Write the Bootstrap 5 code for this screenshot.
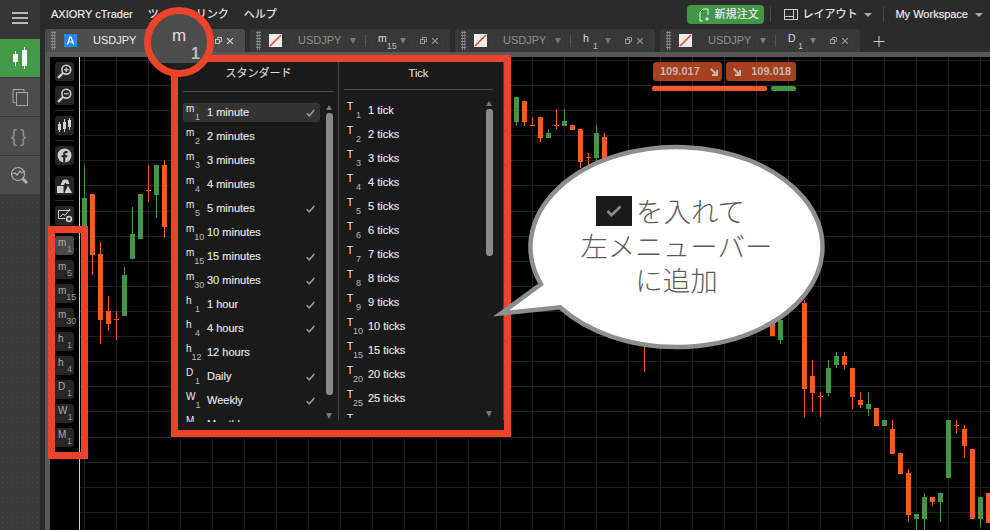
<!DOCTYPE html>
<html lang="ja">
<head>
<meta charset="utf-8">
<title>cTrader</title>
<link href="https://cdn.jsdelivr.net/npm/bootstrap@5.3.0/dist/css/bootstrap.min.css" rel="stylesheet">
<style>
html,body{height:100%;margin:0;overflow:hidden;background:#000}
body{font-family:"Liberation Sans","Noto Sans CJK JP",sans-serif;font-size:11px;line-height:1.2;color:#ddd}
.x-app{width:990px;height:530px}
.x-dots{background-color:#3b3b3b;background-image:radial-gradient(#4a4a4a .6px,transparent .7px);background-size:5px 5px}
.x-side{width:40px;flex:none}
.x-burger{height:39px;background:#363636;padding:12px 12px 0}
.x-burger i{display:block;height:2px;background:#b8b8b8;margin-bottom:3px}
.x-sitem{height:39px;background:#4c4c4c;border-bottom:1px solid #3a3a3a;color:#9b9b9b}
.x-sitem.on{background:#429b47;color:#fff}
.x-brace{font-size:19px;letter-spacing:3px;color:#8f8f8f;font-family:"Liberation Sans",sans-serif}
.x-main{flex:1 1 auto;background:#2b2b2b;min-width:0}
.x-top{height:29px;padding-left:11px;flex:none;color:#f0f0f0;-webkit-text-stroke:.15px #f0f0f0}
.x-mi{margin-left:15px}
.x-green{width:77px;height:19px;background:#429646;border-radius:4px;padding-left:11px;color:#eef}
.x-green span{margin-left:3px;letter-spacing:.1px}
.x-sep{width:1px;height:15px;background:#4b4b4b}
.x-sp1{margin:0 13px 0 6px}
.x-lay{margin-right:4px}
.x-cr{width:0;height:0;border-left:4px solid transparent;border-right:4px solid transparent;border-top:4px solid #aaa;flex:none}
.x-cr1{margin:0 11px 0 7px}
.x-sp2{margin-right:11px}
.x-cr2{margin:0 7px 0 7px}
.x-tabs{height:23px;padding-left:5px;flex:none;gap:5px}
.x-tab{width:200px;height:23px;background-color:#383838;background-image:radial-gradient(#444 .6px,transparent .7px);background-size:5px 5px;border-radius:3px 3px 0 0;padding-left:6px;color:#8f8f8f;font-size:11px}
.x-tab.on{background:#4d4d4d;color:#eee}
.x-grip{width:5px;height:19px;background-image:radial-gradient(#8a8a8a 1px,transparent 1.1px);background-size:2.5px 3px;flex:none}
.x-ico{width:13px;height:13px;margin-left:8px;flex:none;position:relative;display:block}
.x-name{margin-left:16px;width:52px;flex:none}
.x-ar{width:0;height:0;border-left:3.5px solid transparent;border-right:3.5px solid transparent;border-top:6px solid #777;flex:none}
.x-dv{width:1px;height:12px;background:#555;margin-left:9px;flex:none}
.x-tf{width:15px;height:20px;margin-left:12px;flex:none;color:#ddd;font-size:10.5px;line-height:1}
.x-tf b{font-weight:400;align-self:flex-start;padding-top:2px}
.x-tf em{font-style:normal;align-self:flex-end;margin-left:auto;font-size:9px;color:#bbb}
.x-ar2{margin-left:7px}
.x-res{margin-left:14px;flex:none}
.x-cl{margin-left:5px;flex:none}
.x-band{height:5px;background:#585858;flex:none;margin-left:5px}
.x-chartrow{flex:1 1 auto;min-height:0;margin-left:5px;border-left:5px solid #585858}
.x-tools{width:30px;flex:none;background:#000;border-right:1px solid #cfcfcf;padding:5px 0 0 5px}
.x-tb{width:19px;height:19px;background:#262626;border-radius:3px;margin-bottom:5px;flex:none;color:#ccc}
.x-tb.x-g{margin-top:6px}
.x-ts{width:19px;height:1px;background:#2a2a2a;margin-bottom:5px;flex:none}
.x-tk{padding:2px 2px 1px 3px;font-size:10px;line-height:1;color:#aaa}
.x-tk.on{background:#4a4a4a}
.x-tk b{font-weight:400;align-self:flex-start}
.x-tk em{font-style:normal;align-self:flex-end;margin-left:auto;font-size:9px;color:#999}
.x-chart{flex:1 1 auto;display:block;background:#000;min-width:0}
.x-redbox{border:7px solid #ec432a;left:48px;top:226px;width:40px;height:233px}
.x-price{height:19px;top:62px;background:#a6401f;border-radius:3px;color:#c4b8ae;font-weight:700;font-size:11px}
.x-pa{left:653px;width:69px;padding:0 4px 0 7px}
.x-pb{left:726px;width:70px;padding:0 5px 0 7px}
.x-bar{height:5px;top:86px;border-radius:2px}
.x-bs{left:652px;width:115px;background:#f2592b}
.x-bb{left:771px;width:25px;background:#429646}
.x-pop{left:171px;top:55px;width:340px;height:382px;border:7px solid #ec432a;background:#1a1a1a}
.x-c1{width:161px;border-right:1px solid #444;flex:none;height:358px}
.x-c2{flex:1 1 auto;height:358px;border-right:1px solid #444}
.x-ph{height:30px;margin:0 5px;border-bottom:1px solid #4a4a4a;padding-top:5px;color:#ddd;text-align:center;-webkit-text-stroke:.15px #ddd}
.x-c1 .x-ph{margin-right:4px}
.x-c2 .x-ph{height:28px;margin-right:10px;padding-top:5px}
.x-pbody{padding-left:5px;margin-top:11px;height:319px;overflow:hidden}
.x-c2 .x-pbody{margin-top:11px;height:317px}
.x-list{width:137px;flex:none;gap:5px}
.x-c2 .x-list{width:142px}
.x-it{height:19px;flex:none;padding:0 5px 0 3px;border-radius:3px;color:#e6e6e6;-webkit-text-stroke:.15px #e6e6e6}
.x-it.on{background:#333}
.x-pre{width:14px;height:19px;margin-right:7px;flex:none;font-size:10px;line-height:1;color:#eee;-webkit-text-stroke:0}
.x-pre b{font-weight:400;align-self:flex-start;padding-top:1px}
.x-pre em{font-style:normal;align-self:flex-end;margin-left:auto;font-size:9px;color:#bbb}
.x-scr{width:7px;flex:none;margin-left:6px;height:316px;padding-top:2px}
.x-c2 .x-scr{margin-left:0;padding-top:0}
.x-up{width:0;height:0;border-left:3.5px solid transparent;border-right:3.5px solid transparent;border-bottom:5px solid #777;flex:none}
.x-dn{width:0;height:0;border-left:3.5px solid transparent;border-right:3.5px solid transparent;border-top:6px solid #777;flex:none;margin-top:auto}
.x-th{width:7px;background:#8a8a8a;border-radius:3px;margin-top:3px;flex:none}
.x-t1{height:282px}
.x-t2{height:147px}
.x-circle{left:144px;top:7px;width:70px;height:70px;border:7px solid #ec432a;background:linear-gradient(#4c4c4c 88%,#1f1f1f 88%);color:#ddd;font-size:17px;line-height:1}
.x-circle span{display:block}
.x-circle .x-cm{padding:13px 0 0 21px}
.x-circle .x-c1n{padding:2px 0 0 40px;font-weight:700;font-size:16px;color:#bbb}
.x-bubble{left:490px;top:140px;width:340px;height:215px;display:block}
.x-btext{left:528px;top:143px;width:297px;height:204px;color:#5c5c5c;font-size:27.5px;line-height:34.5px;font-weight:300;font-family:"Noto Sans CJK JP",sans-serif}
.x-ck{width:36px;height:30px;background:#1a1a1a;margin-right:4px}
.x-l1{margin-right:12px}
</style>
</head>
<body>
<div class="x-app d-flex position-relative overflow-hidden">
  <aside class="x-side d-flex flex-column x-dots">
    <div class="x-burger"><i></i><i></i><i></i></div>
    <div class="x-sitem on d-flex align-items-center justify-content-center">
      <svg width="18" height="22" viewBox="0 0 18 22"><path fill="#fff" d="M2 7h5v8H2zM4 4h1v15H4zM11 3h5v16h-5zM13 0h1v22h-1z"/></svg>
    </div>
    <div class="x-sitem d-flex align-items-center justify-content-center">
      <svg width="16" height="18" viewBox="0 0 16 18" fill="none" stroke="#a5a5a5"><path d="M3.500 14.500H1V1.500h11V4"/><rect x="4.500" y="4.500" width="11" height="13"/></svg>
    </div>
    <div class="x-sitem d-flex align-items-center justify-content-center"><span class="x-brace">{}</span></div>
    <div class="x-sitem d-flex align-items-center justify-content-center">
      <svg width="22" height="20" viewBox="0 0 22 20" fill="none" stroke="#b0b0b0" stroke-width="1.200"><circle cx="9" cy="9" r="6.500"/><path d="M3 9l3-1 2 2 3-4 2 2 3-2M13.500 13.500l4.500 4.500"/><path d="M14 14l4 4" stroke-width="3"/></svg>
    </div>
    <div class="flex-grow-1"></div>
  </aside>
  <main class="x-main d-flex flex-column">
    <div class="x-top d-flex align-items-center text-nowrap">
      <span>AXIORY cTrader</span>
      <span class="x-mi">ツール</span>
      <span class="x-mi">リンク</span>
      <span class="x-mi">ヘルプ</span>
      <div class="ms-auto d-flex align-items-center">
        <div class="x-green d-flex align-items-center">
          <svg width="13" height="14" viewBox="0 0 13 14" fill="none" stroke="#dfe"><path d="M5 13H2V4l3-3h5v6"/><path d="M9 9v4M7 11h4"/></svg>
          <span>新規注文</span>
        </div>
        <i class="x-sep x-sp1"></i>
        <svg class="x-lay" width="14" height="13" viewBox="0 0 14 13" fill="none" stroke="#ccc"><rect x=".5" y="1.500" width="13" height="10"/><path d="M9.500 1.500v10M.5 8.500h9"/></svg>
        <span>レイアウト</span>
        <i class="x-cr x-cr1"></i>
        <i class="x-sep x-sp2"></i>
        <span>My Workspace</span>
        <i class="x-cr x-cr2"></i>
      </div>
    </div>
    <div class="x-tabs d-flex">
      <div class="x-tab on d-flex align-items-center">
        <i class="x-grip"></i>
        <svg class="x-ico" viewBox="0 0 13 13"><rect width="13" height="13" fill="#2b86e0"/><path fill="#fff" d="M5.600 2.500h1.800l3 8H9l-.7-2H4.700l-.7 2H2.600zm-.5 4.900h2.800L6.500 3.800z"/></svg>
        <span class="x-name">USDJPY</span>
        <i class="x-ar"></i><i class="x-dv"></i>
        <span class="x-tf d-flex"><b>m</b><em>1</em></span>
        <i class="x-ar x-ar2"></i>
        <svg class="x-res" width="7" height="7" viewBox="0 0 7 7" fill="none" stroke="#c0c0c0"><path d="M2.500 2V.5h4v4H5"/><rect x=".5" y="2.500" width="4" height="4"/></svg>
        <svg class="x-cl" width="6" height="6" viewBox="0 0 6 6" stroke="#ddd" stroke-width="1.100"><path d="M0 0l6 6M6 0L0 6"/></svg>
      </div>
      <div class="x-tab d-flex align-items-center">
        <i class="x-grip"></i>
        <svg class="x-ico" viewBox="0 0 13 13"><rect width="13" height="13" fill="#eee"/><path stroke="#ec432a" stroke-width="1.600" d="M1 12L12 1"/></svg>
        <span class="x-name">USDJPY</span>
        <i class="x-ar"></i><i class="x-dv"></i>
        <span class="x-tf d-flex"><b>m</b><em>15</em></span>
        <i class="x-ar x-ar2"></i>
        <svg class="x-res" width="7" height="7" viewBox="0 0 7 7" fill="none" stroke="#999"><path d="M2.500 2V.5h4v4H5"/><rect x=".5" y="2.500" width="4" height="4"/></svg>
        <svg class="x-cl" width="6" height="6" viewBox="0 0 6 6" stroke="#999" stroke-width="1.100"><path d="M0 0l6 6M6 0L0 6"/></svg>
      </div>
      <div class="x-tab d-flex align-items-center">
        <i class="x-grip"></i>
        <svg class="x-ico" viewBox="0 0 13 13"><rect width="13" height="13" fill="#eee"/><path stroke="#ec432a" stroke-width="1.600" d="M1 12L12 1"/></svg>
        <span class="x-name">USDJPY</span>
        <i class="x-ar"></i><i class="x-dv"></i>
        <span class="x-tf d-flex"><b>h</b><em>1</em></span>
        <i class="x-ar x-ar2"></i>
        <svg class="x-res" width="7" height="7" viewBox="0 0 7 7" fill="none" stroke="#999"><path d="M2.500 2V.5h4v4H5"/><rect x=".5" y="2.500" width="4" height="4"/></svg>
        <svg class="x-cl" width="6" height="6" viewBox="0 0 6 6" stroke="#999" stroke-width="1.100"><path d="M0 0l6 6M6 0L0 6"/></svg>
      </div>
      <div class="x-tab d-flex align-items-center">
        <i class="x-grip"></i>
        <svg class="x-ico" viewBox="0 0 13 13"><rect width="13" height="13" fill="#eee"/><path stroke="#ec432a" stroke-width="1.600" d="M1 12L12 1"/></svg>
        <span class="x-name">USDJPY</span>
        <i class="x-ar"></i><i class="x-dv"></i>
        <span class="x-tf d-flex"><b>D</b><em>1</em></span>
        <i class="x-ar x-ar2"></i>
        <svg class="x-res" width="7" height="7" viewBox="0 0 7 7" fill="none" stroke="#999"><path d="M2.500 2V.5h4v4H5"/><rect x=".5" y="2.500" width="4" height="4"/></svg>
        <svg class="x-cl" width="6" height="6" viewBox="0 0 6 6" stroke="#999" stroke-width="1.100"><path d="M0 0l6 6M6 0L0 6"/></svg>
      </div>
      <svg class="ms-2 align-self-center" width="12" height="12" viewBox="0 0 12 12" stroke="#ccc"><path d="M6 1v11M.5 6.500h11"/></svg>
    </div>
    <div class="x-band"></div>
    <div class="x-chartrow d-flex">
      <div class="x-tools d-flex flex-column">
        <div class="x-tb d-flex align-items-center justify-content-center"><svg width="15" height="15" viewBox="0 0 15 15" fill="none" stroke="#d0d0d0" stroke-width="1.600"><circle cx="9.300" cy="5.700" r="4.400"/><path d="M6 9l-5 5" stroke-width="2.400"/><path d="M7 5.700h4.600M9.300 3.400V8" stroke-width="1.200"/></svg></div>
        <div class="x-tb d-flex align-items-center justify-content-center"><svg width="15" height="15" viewBox="0 0 15 15" fill="none" stroke="#d0d0d0" stroke-width="1.600"><circle cx="9.300" cy="5.700" r="4.400"/><path d="M6 9l-5 5" stroke-width="2.400"/><path d="M7 5.700h4.600" stroke-width="1.200"/></svg></div>
        <i class="x-ts"></i>
        <div class="x-tb d-flex align-items-center justify-content-center"><svg width="13" height="15" viewBox="0 0 13 15" fill="#d0d0d0"><path d="M0 6h3v6H0zM1 4h1v10H1zM5 4h3v7H5zM6 1h1v13H6zM10 2h3v7h-3zM11 0h1v12h-1z"/></svg></div>
        <i class="x-ts"></i>
        <div class="x-tb d-flex align-items-center justify-content-center"><svg width="15" height="15" viewBox="0 0 15 15"><circle cx="7.500" cy="7.500" r="7" fill="#ccc"/><path fill="#262626" d="M8.300 14.500V9.300h1.800l.3-2H8.300V6c0-.6.300-1 1-1h1.200V3.300C10.200 3.200 9.600 3.100 9 3.100c-1.700 0-2.800 1-2.800 2.800v1.400H4.400v2h1.800v5.200z"/></svg></div>
        <div class="x-tb x-g d-flex align-items-center justify-content-center"><svg width="15" height="14" viewBox="0 0 15 14" fill="#d0d0d0"><path d="M3.500 6L5.500 1.500C6.500.4 10 .2 11.200 1.500L12.500 5H9.500L8.300 3.500 7 6z"/><path d="M0 7h6.500v7H0z"/><path d="M7.500 14L11 6.500 15 14z"/></svg></div>
        <i class="x-ts"></i>
        <div class="x-tb d-flex align-items-center justify-content-center"><svg width="16" height="15" viewBox="0 0 16 15" fill="none" stroke="#c8c8c8"><path d="M8 10.500H1.500v-8h12"/><path d="M3 9l3-3 2 1.500L13 1"/><circle cx="12" cy="11" r="2.300" stroke-width="1.800"/></svg></div>
        <div class="x-tb x-tk on x-g d-flex"><b>m</b><em>1</em></div>
        <div class="x-tb x-tk d-flex"><b>m</b><em>5</em></div>
        <div class="x-tb x-tk d-flex"><b>m</b><em>15</em></div>
        <div class="x-tb x-tk d-flex"><b>m</b><em>30</em></div>
        <div class="x-tb x-tk d-flex"><b>h</b><em>1</em></div>
        <div class="x-tb x-tk d-flex"><b>h</b><em>4</em></div>
        <div class="x-tb x-tk d-flex"><b>D</b><em>1</em></div>
        <div class="x-tb x-tk d-flex"><b>W</b><em>1</em></div>
        <div class="x-tb x-tk d-flex"><b>M</b><em>1</em></div>
      </div>
      <svg class="x-chart" width="910" height="473" viewBox="80 57 910 473" preserveAspectRatio="none" shape-rendering="crispEdges">
        <path stroke="#1f1f27" fill="none" d="M84.500 57V530M116.500 57V530M148.500 57V530M180.500 57V530M212.500 57V530M244.500 57V530M276.500 57V530M308.500 57V530M340.500 57V530M372.500 57V530M404.500 57V530M436.500 57V530M468.500 57V530M500.500 57V530M532.500 57V530M564.500 57V530M596.500 57V530M628.500 57V530M660.500 57V530M692.500 57V530M724.500 57V530M756.500 57V530M788.500 57V530M820.500 57V530M852.500 57V530M884.500 57V530M916.500 57V530M948.500 57V530M980.500 57V530M80 60.500H990M80 85.500H990M80 110.500H990M80 135.500H990M80 160.500H990M80 185.500H990M80 211.500H990M80 236.500H990M80 261.500H990M80 286.500H990M80 311.500H990M80 336.500H990M80 361.500H990M80 386.500H990M80 411.500H990M80 437.500H990M80 462.500H990M80 487.500H990M80 512.500H990"/>
        <path fill="#f2592b" d="M90 194h5v61h-5zM92 255h1v20h-1zM98 254h5v66h-5zM100 242h1v102h-1zM106 311h5v13h-5zM108 296h1v35h-1zM114 319h5v1h-5zM116 311h1v29h-1zM146 190h5v1h-5zM148 165h1v37h-1zM162 165h5v62h-5zM164 160h1v78h-1zM522 101h5v21h-5zM524 122h1v4h-1zM530 125h5v1h-5zM532 117h1v9h-1zM538 117h5v21h-5zM540 138h1v4h-1zM554 125h5v1h-5zM556 109h1v20h-1zM570 125h5v5h-5zM578 129h5v33h-5zM580 162h1v6h-1zM586 157h5v1h-5zM588 153h1v12h-1zM602 137h5v30h-5zM604 133h1v4h-1zM644 340h1v32h-1zM770 324h5v12h-5zM802 303h5v86h-5zM804 300h1v117h-1zM810 376h5v17h-5zM812 360h1v52h-1zM818 396h5v1h-5zM820 392h1v25h-1zM842 356h5v9h-5zM844 352h1v17h-1zM850 368h5v29h-5zM852 397h1v12h-1zM858 400h5v5h-5zM860 392h1v16h-1zM874 408h5v18h-5zM890 429h5v25h-5zM892 420h1v9h-1zM898 453h5v21h-5zM906 473h5v42h-5zM908 469h1v53h-1zM930 497h5v5h-5zM932 502h1v4h-1zM954 425h5v1h-5zM956 420h1v13h-1zM962 429h5v17h-5zM964 425h1v33h-1zM970 449h5v70h-5zM986 493h4v30h-4z"/>
        <path fill="#429646" d="M82 198h5v28h-5zM84 165h1v33h-1zM122 275h5v41h-5zM124 267h1v8h-1zM130 234h5v25h-5zM132 207h1v27h-1zM138 194h5v45h-5zM154 165h5v30h-5zM156 195h1v23h-1zM514 97h5v25h-5zM516 122h1v4h-1zM546 133h5v5h-5zM548 129h1v4h-1zM562 121h5v5h-5zM564 109h1v12h-1zM594 133h5v25h-5zM596 125h1v8h-1zM596 158h1v3h-1zM778 320h5v20h-5zM780 340h1v4h-1zM826 368h5v25h-5zM828 360h1v8h-1zM828 393h1v3h-1zM834 356h5v9h-5zM836 352h1v4h-1zM836 365h1v3h-1zM866 404h5v5h-5zM868 392h1v12h-1zM868 409h1v7h-1zM882 420h5v6h-5zM914 514h5v5h-5zM916 519h1v11h-1zM922 497h5v22h-5zM924 493h1v4h-1zM924 519h1v11h-1zM938 493h5v9h-5zM940 502h1v20h-1zM946 420h5v58h-5zM978 497h5v22h-5zM980 519h1v8h-1z"/>
      </svg>
    </div>
  </main>

  <div class="x-price x-pa position-absolute d-flex align-items-center justify-content-between">
    <span>109.017</span>
    <svg width="8" height="8" viewBox="0 0 8 8" fill="#c4b8ae"><path d="M0 1.500L1.500 0 6 4.500V2h2v6H2V6h2.500z"/></svg>
  </div>
  <div class="x-price x-pb position-absolute d-flex align-items-center justify-content-between">
    <svg width="8" height="8" viewBox="0 0 8 8" fill="#c4b8ae"><path d="M0 1.500L1.500 0 6 4.500V2h2v6H2V6h2.500z"/></svg>
    <span>109.018</span>
  </div>
  <div class="x-bar x-bs position-absolute"></div>
  <div class="x-bar x-bb position-absolute"></div>

  <div class="x-redbox position-absolute"></div>

  <div class="x-pop position-absolute d-flex">
    <div class="x-c1">
      <div class="x-ph">スタンダード</div>
      <div class="x-pbody d-flex">
        <div class="x-list d-flex flex-column">
          <div class="x-it on d-flex align-items-center"><span class="x-pre d-flex"><b>m</b><em>1</em></span><span>1 minute</span><svg class="ms-auto" width="9" height="8" viewBox="0 0 9 8" fill="none" stroke="#999" stroke-width="1.600"><path d="M.7 4.200l2.600 2.600L8.300 1"/></svg></div>
          <div class="x-it d-flex align-items-center"><span class="x-pre d-flex"><b>m</b><em>2</em></span><span>2 minutes</span></div>
          <div class="x-it d-flex align-items-center"><span class="x-pre d-flex"><b>m</b><em>3</em></span><span>3 minutes</span></div>
          <div class="x-it d-flex align-items-center"><span class="x-pre d-flex"><b>m</b><em>4</em></span><span>4 minutes</span></div>
          <div class="x-it d-flex align-items-center"><span class="x-pre d-flex"><b>m</b><em>5</em></span><span>5 minutes</span><svg class="ms-auto" width="9" height="8" viewBox="0 0 9 8" fill="none" stroke="#999" stroke-width="1.600"><path d="M.7 4.200l2.600 2.600L8.300 1"/></svg></div>
          <div class="x-it d-flex align-items-center"><span class="x-pre d-flex"><b>m</b><em>10</em></span><span>10 minutes</span></div>
          <div class="x-it d-flex align-items-center"><span class="x-pre d-flex"><b>m</b><em>15</em></span><span>15 minutes</span><svg class="ms-auto" width="9" height="8" viewBox="0 0 9 8" fill="none" stroke="#999" stroke-width="1.600"><path d="M.7 4.200l2.600 2.600L8.300 1"/></svg></div>
          <div class="x-it d-flex align-items-center"><span class="x-pre d-flex"><b>m</b><em>30</em></span><span>30 minutes</span><svg class="ms-auto" width="9" height="8" viewBox="0 0 9 8" fill="none" stroke="#999" stroke-width="1.600"><path d="M.7 4.200l2.600 2.600L8.300 1"/></svg></div>
          <div class="x-it d-flex align-items-center"><span class="x-pre d-flex"><b>h</b><em>1</em></span><span>1 hour</span><svg class="ms-auto" width="9" height="8" viewBox="0 0 9 8" fill="none" stroke="#999" stroke-width="1.600"><path d="M.7 4.200l2.600 2.600L8.300 1"/></svg></div>
          <div class="x-it d-flex align-items-center"><span class="x-pre d-flex"><b>h</b><em>4</em></span><span>4 hours</span><svg class="ms-auto" width="9" height="8" viewBox="0 0 9 8" fill="none" stroke="#999" stroke-width="1.600"><path d="M.7 4.200l2.600 2.600L8.300 1"/></svg></div>
          <div class="x-it d-flex align-items-center"><span class="x-pre d-flex"><b>h</b><em>12</em></span><span>12 hours</span></div>
          <div class="x-it d-flex align-items-center"><span class="x-pre d-flex"><b>D</b><em>1</em></span><span>Daily</span><svg class="ms-auto" width="9" height="8" viewBox="0 0 9 8" fill="none" stroke="#999" stroke-width="1.600"><path d="M.7 4.200l2.600 2.600L8.300 1"/></svg></div>
          <div class="x-it d-flex align-items-center"><span class="x-pre d-flex"><b>W</b><em>1</em></span><span>Weekly</span><svg class="ms-auto" width="9" height="8" viewBox="0 0 9 8" fill="none" stroke="#999" stroke-width="1.600"><path d="M.7 4.200l2.600 2.600L8.300 1"/></svg></div>
          <div class="x-it d-flex align-items-center"><span class="x-pre d-flex"><b>M</b><em>1</em></span><span>Monthly</span></div>
        </div>
        <div class="x-scr d-flex flex-column"><i class="x-up"></i><i class="x-th x-t1"></i><i class="x-dn"></i></div>
      </div>
    </div>
    <div class="x-c2">
      <div class="x-ph">Tick</div>
      <div class="x-pbody d-flex">
        <div class="x-list d-flex flex-column">
          <div class="x-it d-flex align-items-center"><span class="x-pre d-flex"><b>T</b><em>1</em></span><span>1 tick</span></div>
          <div class="x-it d-flex align-items-center"><span class="x-pre d-flex"><b>T</b><em>2</em></span><span>2 ticks</span></div>
          <div class="x-it d-flex align-items-center"><span class="x-pre d-flex"><b>T</b><em>3</em></span><span>3 ticks</span></div>
          <div class="x-it d-flex align-items-center"><span class="x-pre d-flex"><b>T</b><em>4</em></span><span>4 ticks</span></div>
          <div class="x-it d-flex align-items-center"><span class="x-pre d-flex"><b>T</b><em>5</em></span><span>5 ticks</span></div>
          <div class="x-it d-flex align-items-center"><span class="x-pre d-flex"><b>T</b><em>6</em></span><span>6 ticks</span></div>
          <div class="x-it d-flex align-items-center"><span class="x-pre d-flex"><b>T</b><em>7</em></span><span>7 ticks</span></div>
          <div class="x-it d-flex align-items-center"><span class="x-pre d-flex"><b>T</b><em>8</em></span><span>8 ticks</span></div>
          <div class="x-it d-flex align-items-center"><span class="x-pre d-flex"><b>T</b><em>9</em></span><span>9 ticks</span></div>
          <div class="x-it d-flex align-items-center"><span class="x-pre d-flex"><b>T</b><em>10</em></span><span>10 ticks</span></div>
          <div class="x-it d-flex align-items-center"><span class="x-pre d-flex"><b>T</b><em>15</em></span><span>15 ticks</span></div>
          <div class="x-it d-flex align-items-center"><span class="x-pre d-flex"><b>T</b><em>20</em></span><span>20 ticks</span></div>
          <div class="x-it d-flex align-items-center"><span class="x-pre d-flex"><b>T</b><em>25</em></span><span>25 ticks</span></div>
          <div class="x-it d-flex align-items-center"><span class="x-pre d-flex"><b>T</b><em>30</em></span><span>30 ticks</span></div>
        </div>
        <div class="x-scr d-flex flex-column"><i class="x-up"></i><i class="x-th x-t2"></i><i class="x-dn"></i></div>
      </div>
    </div>
  </div>

  <div class="x-circle position-absolute rounded-circle overflow-hidden">
    <span class="x-cm">m</span>
    <span class="x-c1n">1</span>
  </div>

  <svg class="x-bubble position-absolute" width="340" height="215" viewBox="490 140 340 215">
    <path fill="#fff" stroke="#8e8e8e" stroke-width="4.500" stroke-miterlimit="12" d="M541 284.240A146 100 0 1 1 560 307.270L501 313.500Z"/>
  </svg>
  <div class="x-btext position-absolute d-flex flex-column align-items-center justify-content-center text-nowrap">
    <div class="x-l1 d-flex align-items-center">
      <span class="x-ck d-flex align-items-center justify-content-center"><svg width="16" height="12" viewBox="0 0 16 12" fill="none" stroke="#8a8a8a" stroke-width="2.600"><path d="M1.500 6l4 4.200L14.500 1.500"/></svg></span>
      <span>を入れて</span>
    </div>
    <div>左メニューバー</div>
    <div>に追加</div>
  </div>
</div>
<script src="https://cdn.jsdelivr.net/npm/bootstrap@5.3.0/dist/js/bootstrap.bundle.min.js"></script>
</body>
</html>
